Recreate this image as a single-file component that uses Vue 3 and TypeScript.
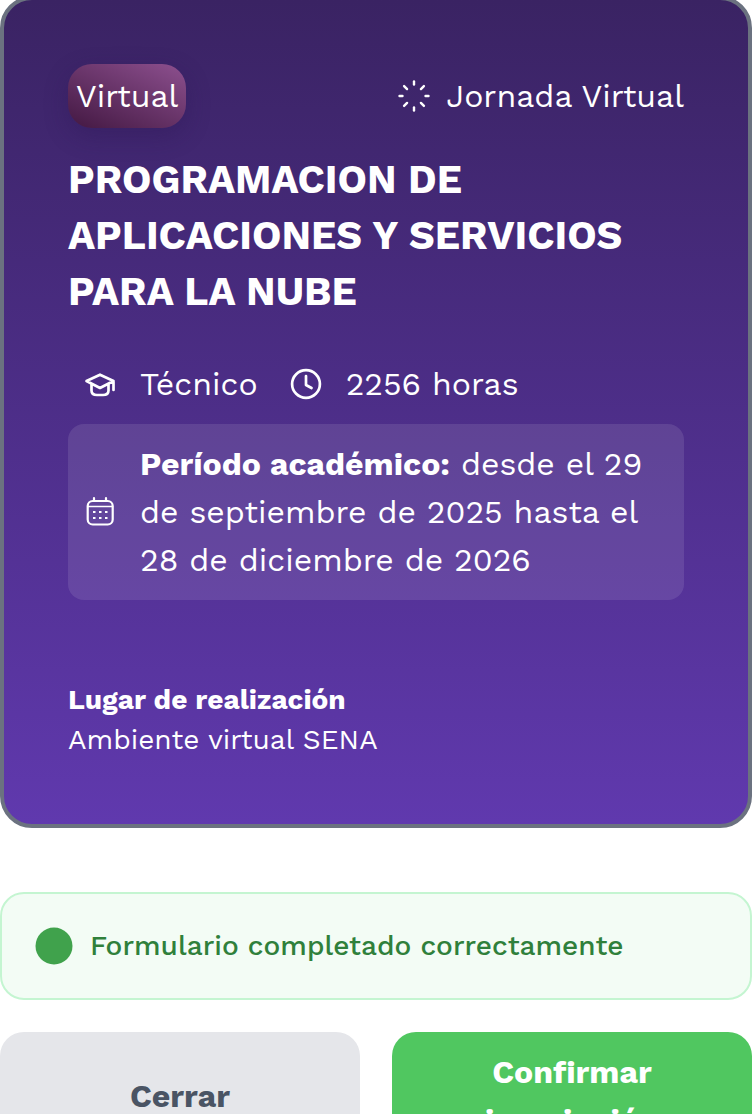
<script setup lang="ts">
interface Program {
  mode: string
  schedule: string
  title: string
  level: string
  hours: number
  start: string
  end: string
  place: string
}

const program: Program = {
  mode: 'Virtual',
  schedule: 'Jornada Virtual',
  title: 'PROGRAMACION DE APLICACIONES Y SERVICIOS PARA LA NUBE',
  level: 'Técnico',
  hours: 2256,
  start: '29 de septiembre de 2025',
  end: '28 de diciembre de 2026',
  place: 'Ambiente virtual SENA',
}

const straightRays: number[] = [0, 90, 180, 270]
const diagonalRays: number[] = [45, 135, 225, 315]
</script>

<template>
  <main class="page">
    <article class="card">
      <header class="card-head">
        <span class="badge">{{ program.mode }}</span>
        <span class="schedule">
          <svg class="icon" viewBox="0 0 32 32" stroke-width="2.4" aria-hidden="true">
            <path v-for="angle in straightRays" :key="angle" d="M16 1.5v3" :transform="`rotate(${angle} 16 16)`" />
            <path v-for="angle in diagonalRays" :key="angle" d="M16 2v4.200" :transform="`rotate(${angle} 16 16)`" />
          </svg>
          {{ program.schedule }}
        </span>
      </header>

      <h1 class="title">{{ program.title }}</h1>

      <div class="meta">
        <span class="meta-item">
          <svg class="icon" viewBox="0 0 32 32" stroke-width="2.7" aria-hidden="true">
            <path d="M2.500 13 16 6.700 29.500 13 16 20zM7.500 16v6.500c0 3 2.500 4.500 5.500 4.500h6c3 0 5.500-1.500 5.500-4.500V16M29.500 13.500v8.500" />
          </svg>
          {{ program.level }}
        </span>
        <span class="meta-item">
          <svg class="icon" viewBox="0 0 32 32" stroke-width="2.7" aria-hidden="true">
            <circle cx="16" cy="16" r="13.900" />
            <path d="M16 8v9l5.500 3" />
          </svg>
          {{ program.hours }} horas
        </span>
      </div>

      <div class="period">
        <svg class="icon" viewBox="0 0 32 32" stroke-width="2.2" aria-hidden="true">
          <rect x="3.700" y="5" width="25" height="23.500" rx="5" />
          <path d="M10 2v3M22 2v3" />
          <path d="M4 10.500h24.500" stroke-width="1.500" />
          <path d="M9 16h2.500M15 16h2.500M21 16h2.500M9 22h2.500M15 22h2.500M21 22h2.500" stroke-linecap="butt" />
        </svg>
        <p class="period-text"><strong>Período académico:</strong> desde el {{ program.start }} hasta el {{ program.end }}</p>
      </div>

      <footer class="place">
        <strong>Lugar de realización</strong>
        <span>{{ program.place }}</span>
      </footer>
    </article>

    <div class="notice" role="status">
      <svg class="notice-dot" viewBox="0 0 40 40" aria-hidden="true">
        <circle cx="20" cy="20" r="18.5" />
      </svg>
      Formulario completado correctamente
    </div>

    <div class="actions">
      <button type="button" class="btn close">Cerrar</button>
      <button type="button" class="btn confirm">Confirmar inscripción</button>
    </div>
  </main>
</template>

<style>
body {
  margin: 0;
  background: #fff;
}
</style>

<style scoped>
.page {
  box-sizing: border-box;
  height: 100vh;
  overflow: hidden;
  font-family: "Work Sans", Inter, "Noto Sans", sans-serif;
  font-size: 32px;
  line-height: 48px;
}

.card {
  margin-top: -4px;
  padding: 64px;
  border: 4px solid #6b7280;
  border-radius: 32px;
  background: linear-gradient(180deg, #3a2363, #6039ae);
  color: #fff;
  font-weight: 400;
}

.card-head {
  display: flex;
  align-items: center;
  justify-content: space-between;
}

.badge {
  padding: 8px;
  border-radius: 24px;
  background: linear-gradient(25deg, #431842, #8d508f);
  box-shadow: 0 8px 24px rgba(40, 20, 80, 0.3);
}

.schedule {
  display: flex;
  align-items: center;
  gap: 16px;
}

.icon {
  flex: none;
  width: 32px;
  height: 32px;
  fill: none;
  stroke: currentColor;
  stroke-linecap: round;
  stroke-linejoin: round;
}

.title {
  margin: 24px 0 40px;
  font-size: 40px;
  font-weight: 700;
  line-height: 56px;
}

.meta {
  display: flex;
  gap: 32px;
  padding: 0 16px;
}

.meta-item {
  display: flex;
  align-items: center;
  gap: 24px;
}

.period {
  display: flex;
  align-items: center;
  gap: 24px;
  margin-top: 16px;
  padding: 16px;
  border-radius: 16px;
  background: rgba(255, 255, 255, 0.1);
}

.period-text {
  margin: 0;
}

strong {
  font-weight: 700;
}

.place {
  display: flex;
  flex-direction: column;
  margin-top: 80px;
  font-size: 28px;
  line-height: 40px;
}

.notice {
  display: flex;
  align-items: center;
  gap: 16px;
  margin-top: 64px;
  padding: 32px;
  border: 2px solid #c4f5d1;
  border-radius: 24px;
  background: #f3fcf5;
  color: #2f803b;
  font-size: 28px;
  font-weight: 500;
  line-height: 40px;
}

.notice-dot {
  flex: none;
  width: 40px;
  height: 40px;
  fill: #40a24c;
}

.actions {
  display: grid;
  grid-template-columns: 1fr 1fr;
  gap: 32px;
  margin-top: 32px;
}

.btn {
  padding: 16px 64px;
  border: 0;
  border-radius: 24px;
  font: inherit;
  font-weight: 700;
  cursor: pointer;
}

.close {
  background: #e5e6ea;
  color: #4a5464;
}

.confirm {
  background: #50c760;
  color: #fff;
}
</style>
